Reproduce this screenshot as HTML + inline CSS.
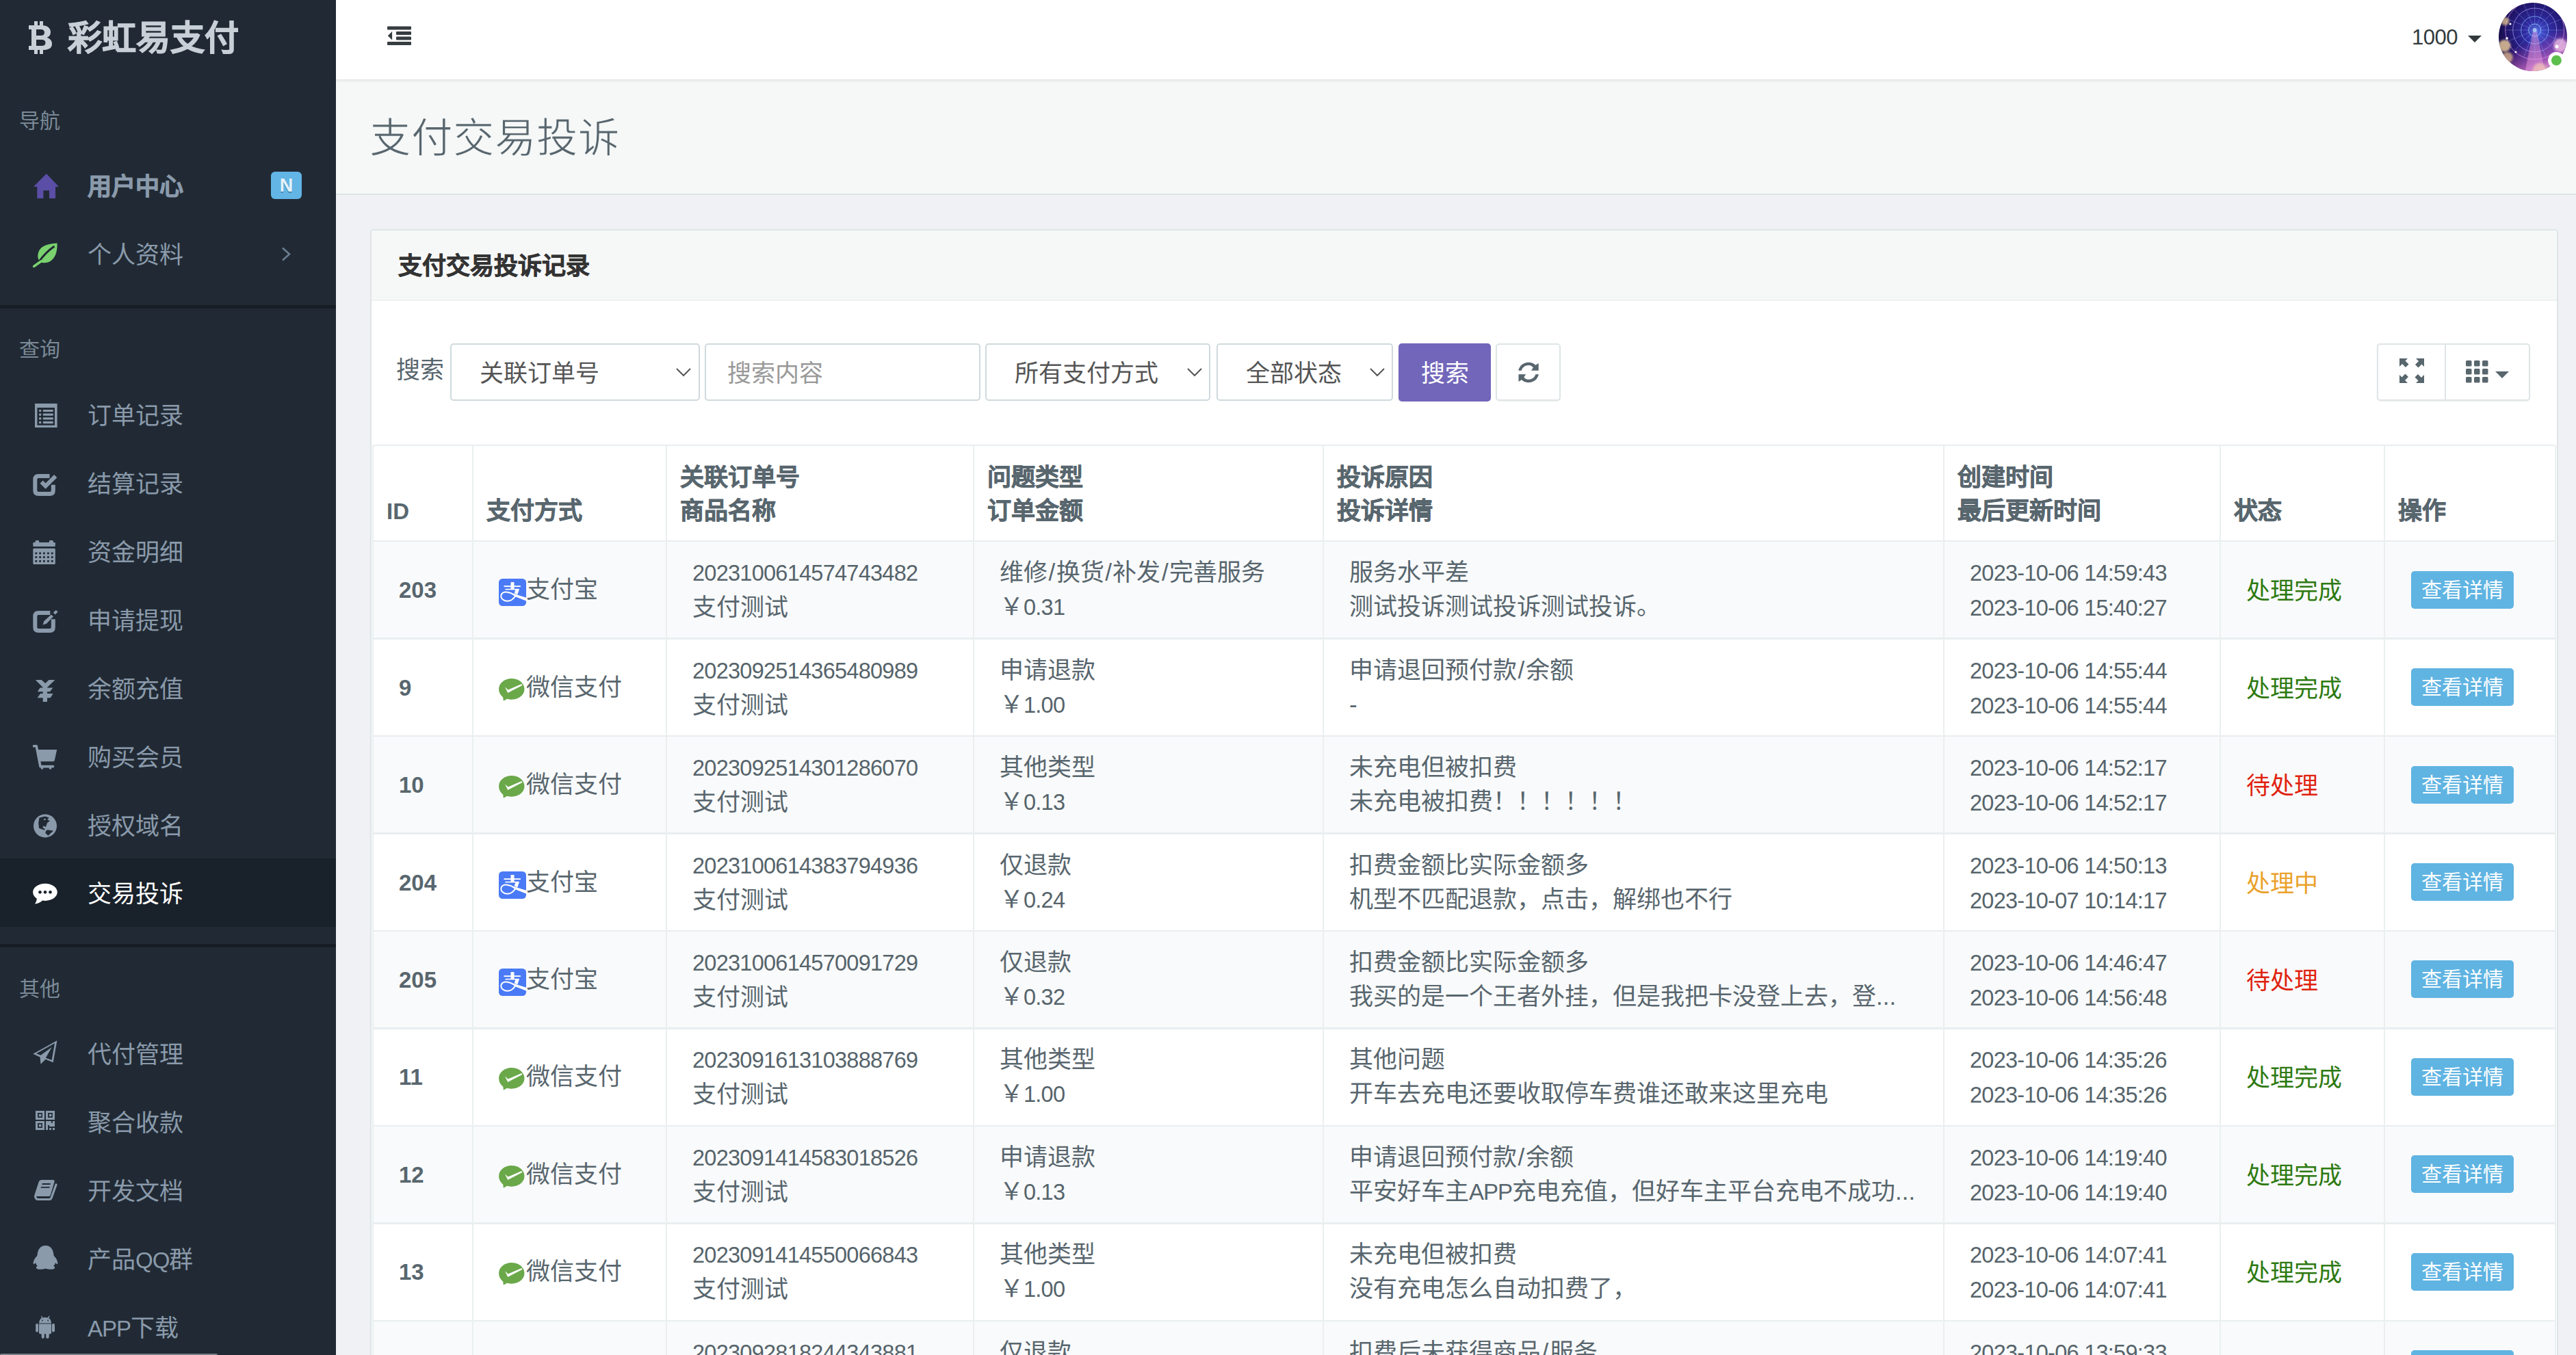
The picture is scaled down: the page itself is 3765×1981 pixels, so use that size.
<!DOCTYPE html>
<html lang="zh-CN"><head><meta charset="utf-8"><title>支付交易投诉</title>
<style>
*{margin:0;padding:0;box-sizing:border-box}
html,body{width:3765px;height:1981px;overflow:hidden;background:#f0f1f4;font-family:"Liberation Sans",sans-serif;color:#58666e}
.abs{position:absolute}
#aside{position:absolute;left:0;top:0;width:491px;height:1981px;background:#212a34;overflow:hidden}
.logo{position:absolute;left:99px;top:16px;-webkit-text-stroke:1px #c8cfd7;font-size:50px;line-height:80px;font-weight:bold;color:#c8cfd7;white-space:nowrap}
.nhd{position:absolute;left:28px;width:200px;font-size:30px;line-height:50px;color:#7b8a98}
.ni{position:absolute;left:0;width:491px;height:100px;line-height:100px;font-size:35px;color:#8a9aab;white-space:nowrap}
.ni .t{position:absolute;left:128px;top:1.5px}
.ni svg{position:absolute}
.ni.act{background:#19212a;color:#fff}
.sep{position:absolute;left:0;width:491px;height:5px;background:#161d25}
#hdr{position:absolute;left:491px;top:0;width:3274px;height:116px;background:#fff;box-shadow:0 2px 4px rgba(0,0,0,.09);z-index:2}
#title{position:absolute;left:491px;top:116px;width:3274px;height:169px;background:#f6f8f8;border-bottom:2px solid #dee5e7}
#title h1{position:absolute;left:48.5px;top:46px;font-size:60.6px;line-height:80px;font-weight:300;color:#58666e;white-space:nowrap;-webkit-text-stroke:1.2px #f6f8f8}
#card{position:absolute;left:541px;top:335px;width:3198px;height:1700px;background:#fff;border:2px solid #dee5e7;border-radius:5px}
#card .ph{position:absolute;left:0;top:0;width:100%;height:103px;background:#f6f8f8;border-bottom:2px solid #edf1f2;border-radius:4px 4px 0 0}
#card .ph span{position:absolute;left:39px;top:27px;font-size:35px;line-height:50px;font-weight:bold;color:#333;-webkit-text-stroke:0.7px #333}
.ctl{position:absolute;top:502px;height:84px;border:2px solid #cfdadd;border-radius:5px;background:#fff;font-size:35px;line-height:80px;color:#555;white-space:nowrap}
.ctl span{position:absolute;top:2px}
.chev{position:absolute;top:34px;width:22px;height:13px}
.btnp{position:absolute;left:2044px;top:502px;width:135px;height:85px;background:#7266ba;border-radius:5px;color:#fff;font-size:35px;line-height:88px;text-align:center}
.btnd{position:absolute;top:502px;height:84px;border:2px solid #dee5e7;border-radius:5px;background:#fff;box-shadow:0 1px 2px rgba(0,0,0,.06)}
.stripe{position:absolute;left:545px;width:3190px;background:#f9fafb}
.hl{position:absolute;left:545px;width:3190px;height:2.5px;background:#e9eef0}
.vl{position:absolute;top:651px;width:2px;height:1400px;background:#eaeff0}
.cell{position:absolute;font-size:35px;line-height:50px;white-space:nowrap;color:#58666e}
.n{font-size:32.5px;letter-spacing:-0.74px;color:#56646b}
.sl{margin:0 1.5px}
.ap{font-size:33px;letter-spacing:-1px}
.nb{font-size:33px;font-weight:bold;color:#58666e}
.nh{font-size:33px}
.th{position:absolute;font-size:35px;line-height:50px;font-weight:bold;color:#58666e;white-space:nowrap;-webkit-text-stroke:0.7px #58666e}
.th .nh{-webkit-text-stroke:0}
.pi{width:40px;height:40px;vertical-align:-12px}
.btn-i{position:absolute;width:150px;height:55px;background:#60b4e2;border-radius:5px;color:#fff;font-size:30px;line-height:55px;text-align:center;white-space:nowrap}
</style></head><body>

<div id="aside">
  <svg class="abs" style="left:42px;top:31px" width="35" height="48" viewBox="0 0 35 48">
    <rect x="8" y="0" width="5" height="8" fill="#c8cfd7"/><rect x="16" y="0" width="5" height="8" fill="#c8cfd7"/>
    <rect x="8" y="40" width="5" height="8" fill="#c8cfd7"/><rect x="16" y="40" width="5" height="8" fill="#c8cfd7"/>
    <path d="M0 6h19c8 0 13 4 13 10 0 4-2 6.5-5.5 8 4.5 1.2 7.5 4.5 7.5 9 0 6.5-5 9-13 9H0v-6h4V12H0zM11 12v9h7c3 0 5-1.5 5-4.5S21 12 18 12zM11 27v9h8c3.5 0 5.5-1.5 5.5-4.5S22.5 27 19 27z" fill="#c8cfd7" fill-rule="evenodd"/>
  </svg>
  <div class="logo">彩虹易支付</div>

  <div class="nhd" style="top:151.5px">导航</div>
  <div class="ni" style="top:221px;color:#8a9aab;font-weight:bold">
    <svg style="left:49px;top:33px" width="37" height="36" viewBox="0 0 37 36"><path d="M0 19L18.8 0 37 19h-5v17h-9V24.5h-8.6V36H5.3V19z" fill="#5b4ea6"/></svg>
    <span class="t" style="-webkit-text-stroke:0.9px #8a9aab">用户中心</span>
    <div class="abs" style="left:396px;top:30px;width:45px;height:40px;background:#62b5e5;border-radius:6px;color:#e4f2fa;font-size:27px;line-height:40px;text-align:center;font-weight:bold;text-shadow:0 2px 0 rgba(0,0,0,.25)">N</div>
  </div>
  <div class="ni" style="top:321px">
    <svg style="left:48px;top:34px" width="36" height="36" viewBox="0 0 36 36"><path d="M35.5 0.5C22 1.5 9.5 4 7.5 17c-.8 5.5 1.5 11 6.5 12 13 2 22.5-9 21.5-28.5z" fill="#7ad26f"/><path d="M9 27.5C15 19 22 11.5 31.5 5" stroke="#212a34" stroke-width="3" fill="none"/><path d="M12 27L1.5 34.5" stroke="#7ad26f" stroke-width="3.5" stroke-linecap="round"/></svg>
    <span class="t">个人资料</span>
    <svg style="left:411px;top:40px" width="15" height="21" viewBox="0 0 15 21"><path d="M2 1.5l10 9-10 9" stroke="#6b7d90" stroke-width="2.6" fill="none"/></svg>
  </div>
  <div class="sep" style="top:446px"></div>

  <div class="nhd" style="top:485.5px">查询</div>
  <div class="ni" style="top:556px">
    <svg style="left:51px;top:34px" width="33" height="35" viewBox="0 0 33 35"><path d="M0 0h32.6v35H0zM3.4 6v25.8H29V6z" fill="#8a9aab" fill-rule="evenodd"/><g fill="#8a9aab"><rect x="6" y="8.9" width="3.3" height="3" rx="1"/><rect x="6" y="14.6" width="3.3" height="3.2" rx="1"/><rect x="6" y="20.2" width="3.3" height="3.3" rx="1"/><rect x="6" y="25.9" width="3.3" height="3.3" rx="1"/><rect x="11.7" y="8.9" width="15.2" height="3" rx="1.2"/><rect x="11.7" y="14.6" width="15.2" height="3.2" rx="1.2"/><rect x="11.7" y="20.2" width="15.2" height="3.3" rx="1.2"/><rect x="11.7" y="25.9" width="15.2" height="3.3" rx="1.2"/></g></svg>
    <span class="t">订单记录</span>
  </div>
  <div class="ni" style="top:656px">
    <svg style="left:48px;top:36px" width="37" height="35" viewBox="0 0 37 35"><path d="M24.5 4H8.3Q3.3 4 3.3 9v16q0 5 5 5h16.5q5 0 5-5v-8.2" stroke="#8a9aab" stroke-width="6" fill="none"/><path d="M12.6 12.6l6 6L33.25 4.1" stroke="#8a9aab" stroke-width="6" fill="none"/></svg>
    <span class="t">结算记录</span>
  </div>
  <div class="ni" style="top:756px">
    <svg style="left:48px;top:33px" width="33" height="37" viewBox="0 0 33 37"><rect x="3.6" y="0.9" width="5.6" height="5" rx="1.5" fill="#8a9aab"/><rect x="23.9" y="0.9" width="6" height="5" rx="1.5" fill="#8a9aab"/><rect x="0.3" y="4" width="32.5" height="5.9" rx="1.2" fill="#8a9aab"/><rect x="0.3" y="12.7" width="32.5" height="23.3" rx="1.5" fill="#8a9aab"/><g fill="#212a34"><rect x="3.4" y="18.5" width="2.8" height="2.8"/><rect x="9.2" y="18.5" width="2.8" height="2.8"/><rect x="15" y="18.5" width="2.8" height="2.8"/><rect x="21" y="18.5" width="2.8" height="2.8"/><rect x="26.8" y="18.5" width="2.8" height="2.8"/><rect x="3.4" y="24.2" width="2.8" height="2.8"/><rect x="9.2" y="24.2" width="2.8" height="2.8"/><rect x="15" y="24.2" width="2.8" height="2.8"/><rect x="21" y="24.2" width="2.8" height="2.8"/><rect x="26.8" y="24.2" width="2.8" height="2.8"/><rect x="3.4" y="30" width="2.8" height="2.8"/><rect x="9.2" y="30" width="2.8" height="2.8"/><rect x="15" y="30" width="2.8" height="2.8"/><rect x="21" y="30" width="2.8" height="2.8"/><rect x="26.8" y="30" width="2.8" height="2.8"/></g></svg>
    <span class="t">资金明细</span>
  </div>
  <div class="ni" style="top:856px">
    <svg style="left:48px;top:35px" width="37" height="35" viewBox="0 0 37 35"><path d="M25.3 5H8.3Q3.3 5 3.3 10v16q0 5 5 5h16.5q5 0 5-5V14.2" stroke="#8a9aab" stroke-width="6" fill="none"/><path d="M14.5 22.5L16.4 17 26.9 7.5 29.9 10.5 20 20.7z" fill="#8a9aab"/><path d="M29.7 4.4L33.8 1 36.6 3.4 32.8 7.5z" fill="#8a9aab"/></svg>
    <span class="t">申请提现</span>
  </div>
  <div class="ni" style="top:956px">
    <svg style="left:48px;top:35px" width="35" height="37" viewBox="0 0 35 37"><path d="M3.8 3H12.7L18.2 7.9 23.5 3H32.4L21 14V35H14.7V14z" fill="#8a9aab"/><path d="M6.8 20.2L10.5 14.4H29.3L24.9 20.2zM6.6 29.2L11.1 23.1H29.5L25.7 29.2z" fill="#8a9aab"/></svg>
    <span class="t">余额充值</span>
  </div>
  <div class="ni" style="top:1056px">
    <svg style="left:48px;top:33px" width="37" height="37" viewBox="0 0 37 37"><path d="M1.2 1.75H5.2L11 31.6H29.5" stroke="#8a9aab" stroke-width="3.6" fill="none" stroke-linecap="round" stroke-linejoin="round"/><path d="M6.6 7H35.2L31.8 22.5Q31.5 24.3 29.5 24.3H10.8z" fill="#8a9aab"/><rect x="11.9" y="31" width="3.2" height="4.8" rx="1.5" fill="#8a9aab"/><rect x="23.9" y="31" width="3.2" height="4.8" rx="1.5" fill="#8a9aab"/></svg>
    <span class="t">购买会员</span>
  </div>
  <div class="ni" style="top:1156px">
    <svg style="left:48px;top:33px" width="37" height="37" viewBox="0 0 37 37"><circle cx="18" cy="18.4" r="17" fill="#8a9aab"/><path d="M9.5 6.4L18 4.4 23.7 6.4 21.2 8.9 24.9 11.3 21.2 13.7 18.8 20.2 16.4 18.4 13.9 20.2 18 23.5 16.5 24.5 9 21.8 8.2 13.7z" fill="#212a34"/><path d="M16 8h2.8v1.7H16z" fill="#8a9aab"/><path d="M18.8 25.9L21.2 24.3 30 25.5 22.4 32.8 18.4 29.1z" fill="#212a34"/></svg>
    <span class="t">授权域名</span>
  </div>
  <div class="ni act" style="top:1255px;height:100px">
    <svg style="left:47px;top:35px" width="38" height="33" viewBox="0 0 38 33"><path d="M6.8 23.7C3.2 21.4 1.1 18 1.1 14.35 1.1 7.4 9.1 1.8 19 1.8S36.8 7.4 36.8 14.35 28.8 26.9 19 26.9c-1.3 0-2.6-.1-3.9-.3C12 29.5 8 31.4 3.75 31.6 5.6 29.4 6.6 26.5 6.8 23.7z" fill="#fff"/><circle cx="11.5" cy="14.35" r="2.3" fill="#19212a"/><circle cx="19" cy="14.35" r="2.3" fill="#19212a"/><circle cx="26.5" cy="14.35" r="2.3" fill="#19212a"/></svg>
    <span class="t">交易投诉</span>
  </div>
  <div class="sep" style="top:1380px"></div>

  <div class="nhd" style="top:1421px">其他</div>
  <div class="ni" style="top:1490px">
    <svg style="left:47px;top:30px" width="38" height="38" viewBox="0 0 38 38"><path d="M1.3 20.8L36.4 1.3 30.7 33.2 19.6 28.8 12.5 35.8 11.5 25.5zM6 20.2L12.5 22.7 28.7 10.9 19.8 26.7 28.7 29.8 33 5.2z" fill="#8a9aab" fill-rule="evenodd"/></svg>
    <span class="t">代付管理</span>
  </div>
  <div class="ni" style="top:1590px">
    <svg style="left:52px;top:34px" width="28" height="28" viewBox="0 0 28 28"><path d="M0 0h13v13H0zM3 3v6.9h6.9V3zM15 0h13v13H15zM18 3v6.9h6.9V3zM0 15h13v13H0zM3 18v6.9h6.9V18z" fill="#8a9aab" fill-rule="evenodd"/><path d="M4.8 4.8h3.5v3.5H4.8zM19.8 4.8h3.5v3.5h-3.5zM4.8 19.8h3.5v3.5H4.8z" fill="#8a9aab"/><path d="M15 15h7.9v2.8h2V15H28v8.1H20.1V21H18v7h-3zM20.1 24.9h2.8V28h-2.8zM24.9 24.9H28V28h-3.1z" fill="#8a9aab"/></svg>
    <span class="t">聚合收款</span>
  </div>
  <div class="ni" style="top:1690px">
    <svg style="left:49px;top:33px" width="35" height="33" viewBox="0 0 35 33"><path d="M11.5 2H28.5Q31.3 2 30.5 5L24.7 24.5Q24.1 26.1 22.5 26.1H3.5Q1 26.1 1.6 23.6L7.8 4.5Q8.6 2 11.5 2zM12.9 7.1L12.3 8.9H24.4L24.9 7.1zM11.1 12.1L10.5 13.8H23.4L23.9 12.1z" fill="#8a9aab" fill-rule="evenodd"/><path d="M2.6 25.5Q2.6 30.5 7 30.5H23Q25.3 30.5 26.2 28L33 9" stroke="#8a9aab" stroke-width="3.2" fill="none" stroke-linecap="round"/></svg>
    <span class="t">开发文档</span>
  </div>
  <div class="ni" style="top:1790px">
    <svg style="left:48px;top:30px" width="37" height="37" viewBox="0 0 37 37"><path d="M18.6 0.9C11 0.9 7 7 6.5 15L6 16.5C3 19 .5 23.5.7 27.5 1 29 2.5 28 4 26 4.5 28.5 5.8 30 7 31 5 31.5 4.5 33 5 34 6 36 11 36 15 35.5 17 35.2 18 34.6 18.6 34.4 19.2 34.6 20.2 35.2 22.2 35.5 26 36 31 36 32 34 32.5 33 32 31.5 30 31 31.2 30 32.5 28.5 33 26 34.5 28 36 29 36.3 27.5 36.5 23.5 34 19 31 16.5L30.5 15C30 7 26 .9 18.6.9z" fill="#8a9aab"/></svg>
    <span class="t">产品<span style="font-size:33px;letter-spacing:-1px">QQ</span>群</span>
  </div>
  <div class="ni" style="top:1890px">
    <svg style="left:52px;top:33px" width="29" height="35" viewBox="0 0 29 35"><path d="M8.3 1.4L10.3 4.3M20.1 1.2L18.2 4.3" stroke="#8a9aab" stroke-width="1.4"/><path d="M5 11Q5.3 3.1 14 3.1T23.1 11z" fill="#8a9aab"/><path d="M5 12.9H23.1V25.5Q23.1 27.2 21.4 27.2H19.7V32.1Q19.7 33.9 17.45 33.9T15.2 32.1V27.2H12.8V32.1Q12.8 33.9 10.75 33.9T8.7 32.1V27.2H6.7Q5 27.2 5 25.5z" fill="#8a9aab"/><rect x="0.2" y="12" width="3.8" height="12.6" rx="1.9" fill="#8a9aab"/><rect x="24" y="12" width="4" height="12.6" rx="2" fill="#8a9aab"/><circle cx="9.9" cy="7.5" r="0.9" fill="#212a34"/><circle cx="18.2" cy="7.5" r="0.9" fill="#212a34"/><path d="M5 11.1h18.1v1.8H5z" fill="#5f6f7e"/></svg>
    <span class="t"><span style="font-size:33px;letter-spacing:-1px">APP</span>下载</span>
  </div>
  <div class="abs" style="left:0;top:1979px;width:318px;height:4px;background:#7b8188;border-radius:2px"></div>
</div>

<div id="hdr">
  <svg class="abs" style="left:75px;top:38px" width="36" height="29" viewBox="0 0 36 29">
    <rect x="0" y="0.5" width="35" height="5" rx="1" fill="#363d41"/>
    <rect x="13" y="8" width="22" height="5" rx="1" fill="#363d41"/>
    <rect x="13" y="15.5" width="22" height="5" rx="1" fill="#363d41"/>
    <rect x="0" y="23" width="35" height="5" rx="1" fill="#363d41"/>
    <path d="M0.8 14.3L7.1 8v12.5z" fill="#363d41"/>
  </svg>
  <div class="abs" style="left:3034px;top:30px;font-size:31px;line-height:50px;color:#333a3d;letter-spacing:-0.5px">1000</div>
  <svg class="abs" style="left:3116px;top:52px" width="20" height="10" viewBox="0 0 20 10"><path d="M0 0h20L10 10z" fill="#333a3d"/></svg>
  <svg class="abs" style="left:3161px;top:4px" width="104" height="104" viewBox="0 0 104 104">
    <defs>
      <radialGradient id="av1" cx="0.55" cy="0.42" r="0.62"><stop offset="0" stop-color="#4a60e0"/><stop offset="0.3" stop-color="#2f2aa0"/><stop offset="0.7" stop-color="#1f1468"/><stop offset="1" stop-color="#140c3a"/></radialGradient>
      <linearGradient id="av2" x1="0.3" y1="0.3" x2="0.6" y2="1"><stop offset="0.35" stop-color="#c050d0" stop-opacity="0"/><stop offset="0.8" stop-color="#d070d0" stop-opacity="0.75"/><stop offset="1" stop-color="#f0b0d8" stop-opacity="0.95"/></linearGradient>
      <clipPath id="avc"><circle cx="50" cy="50" r="50"/></clipPath><filter id="blr" x="-50%" y="-50%" width="200%" height="200%"><feGaussianBlur stdDeviation="1.8"/></filter>
    </defs>
    <g clip-path="url(#avc)">
      <rect width="104" height="104" fill="url(#av1)"/>
      <rect width="104" height="104" fill="url(#av2)"/>
      <g fill="none" stroke-width="1">
        <circle cx="52.7" cy="40" r="9" stroke="#9ad0ff" stroke-opacity=".8"/>
        <circle cx="52.7" cy="40" r="20" stroke="#88c0ff" stroke-opacity=".7"/>
        <circle cx="52.7" cy="40" r="32" stroke="#b0a0ff" stroke-opacity=".7"/>
        <circle cx="52.7" cy="40" r="43" stroke="#e090f0" stroke-opacity=".7"/>
        <path d="M52.7-3V83M9.7 40h86M22.3 9.6l60.8 60.8M83.1 9.6L22.3 70.4M36.2 .3l33 79.4M69.2 .3L36.2 79.7M13 23.5l79.4 33M92.4 23.5L13 56.5" stroke="#a8d0ff" stroke-opacity=".4" stroke-width=".7"/>
      </g>
      <path d="M50 42L38 104H68L56 42z" fill="#f0a0e0" fill-opacity=".45"/>
      <circle cx="52.7" cy="40" r="3" fill="#c8e8ff" fill-opacity=".6"/>
      <circle cx="9.5" cy="27" r="6" fill="#e8c890" fill-opacity=".75" filter="url(#blr)"/>
      <circle cx="8.5" cy="63" r="9" fill="#f0d098" fill-opacity=".8" filter="url(#blr)"/>
      <circle cx="12.6" cy="80" r="8" fill="#f0c890" fill-opacity=".7" filter="url(#blr)"/>
      <circle cx="90" cy="62" r="10" fill="#ffd0f0" fill-opacity=".7" filter="url(#blr)"/>
      <circle cx="60" cy="98" r="10" fill="#f8d0b0" fill-opacity=".6" filter="url(#blr)"/>
      <circle cx="17" cy="31" r="1.5" fill="#fff"/><circle cx="12" cy="52" r="1.8" fill="#fff"/><circle cx="25" cy="72" r="1.5" fill="#fff"/><circle cx="85" cy="64" r="2.5" fill="#fff"/>
    </g>
    <circle cx="84.4" cy="84.3" r="12.3" fill="#fff"/>
    <circle cx="84.4" cy="84.3" r="7.5" fill="#5cbf4d"/>
  </svg>
</div>

<div id="title"><h1>支付交易投诉</h1></div>

<div id="card">
  <div class="ph"><span>支付交易投诉记录</span></div>
</div>

<div class="abs" style="left:579px;top:516px;font-size:35px;line-height:50px;color:#58666e">搜索</div>
<div class="ctl" style="left:658px;width:365px"><span style="left:41px">关联订单号</span><svg class="chev" style="left:327.5px" viewBox="0 0 22 13"><path d="M1 1l10 10L21 1" stroke="#555" stroke-width="2" fill="none"/></svg></div>
<div class="ctl" style="left:1030px;width:403px;color:#999"><span style="left:31px">搜索内容</span></div>
<div class="ctl" style="left:1440px;width:329px"><span style="left:41px">所有支付方式</span><svg class="chev" style="left:292.5px" viewBox="0 0 22 13"><path d="M1 1l10 10L21 1" stroke="#555" stroke-width="2" fill="none"/></svg></div>
<div class="ctl" style="left:1778px;width:258px"><span style="left:41px">全部状态</span><svg class="chev" style="left:222px" viewBox="0 0 22 13"><path d="M1 1l10 10L21 1" stroke="#555" stroke-width="2" fill="none"/></svg></div>
<div class="btnp">搜索</div>
<div class="btnd" style="left:2186px;width:95px">
  <svg class="abs" style="left:31px;top:25px" width="31" height="31" viewBox="0 0 31 31"><path id="rfa" d="M0.3 12.7C1.6 5.6 7.8 0.7 15.1 0.7 19 0.7 22.6 2.2 25.3 4.7L29.7 2V12.7H19L21.9 8.5C20.2 6.2 17.8 5.1 15.1 5.1 10.1 5.1 5.9 8.3 4.9 12.7Z" fill="#58666e"/><path d="M0.3 12.7C1.6 5.6 7.8 0.7 15.1 0.7 19 0.7 22.6 2.2 25.3 4.7L29.7 2V12.7H19L21.9 8.5C20.2 6.2 17.8 5.1 15.1 5.1 10.1 5.1 5.9 8.3 4.9 12.7Z" fill="#58666e" transform="rotate(180 15.1 15.45)"/></svg>
</div>
<div class="btnd" style="left:3474px;width:224px">
  <div class="abs" style="left:97px;top:0;width:2px;height:80px;background:#dee5e7"></div>
  <svg class="abs" style="left:31px;top:20px" width="36" height="36" viewBox="0 0 36 36"><path d="M0 0h12l-3.5 3.5 5 5-4.5 4.5-5-5L0 12zM36 0v12l-3.5-3.5-5 5-4.5-4.5 5-5L24 0zM0 36V24l3.5 3.5 5-5 4.5 4.5-5 5L12 36zM36 36H24l3.5-3.5-5-5 4.5-4.5 5 5L36 24z" fill="#58666e"/></svg>
  <svg class="abs" style="left:128px;top:23px" width="66" height="33" viewBox="0 0 66 33"><g fill="#58666e"><rect x="0" y="0" width="8.5" height="8.5" rx="1.5"/><rect x="12" y="0" width="8.5" height="8.5" rx="1.5"/><rect x="24" y="0" width="8.5" height="8.5" rx="1.5"/><rect x="0" y="12" width="8.5" height="8.5" rx="1.5"/><rect x="12" y="12" width="8.5" height="8.5" rx="1.5"/><rect x="24" y="12" width="8.5" height="8.5" rx="1.5"/><rect x="0" y="24" width="8.5" height="8.5" rx="1.5"/><rect x="12" y="24" width="8.5" height="8.5" rx="1.5"/><rect x="24" y="24" width="8.5" height="8.5" rx="1.5"/><path d="M43 16h20l-10 10z"/></g></svg>
</div>

<div class="stripe" style="top:791.00px;height:142.44px"></div>
<div class="hl" style="top:790.00px;height:2px"></div>
<div class="hl" style="top:932.44px"></div>
<div class="stripe" style="top:1075.88px;height:142.44px"></div>
<div class="hl" style="top:1074.88px"></div>
<div class="hl" style="top:1217.32px"></div>
<div class="stripe" style="top:1360.76px;height:142.44px"></div>
<div class="hl" style="top:1359.76px"></div>
<div class="hl" style="top:1502.20px"></div>
<div class="stripe" style="top:1645.64px;height:142.44px"></div>
<div class="hl" style="top:1644.64px"></div>
<div class="hl" style="top:1787.08px"></div>
<div class="stripe" style="top:1930.52px;height:142.44px"></div>
<div class="hl" style="top:1929.52px"></div>
<div class="hl" style="top:650px;height:2px"></div>
<div class="vl" style="left:544px"></div>
<div class="vl" style="left:690px"></div>
<div class="vl" style="left:973px"></div>
<div class="vl" style="left:1422px"></div>
<div class="vl" style="left:1933px"></div>
<div class="vl" style="left:2840px"></div>
<div class="vl" style="left:3244px"></div>
<div class="vl" style="left:3483.5px"></div>
<div class="vl" style="left:3734px"></div>
<div class="cell" style="left:583px;top:837.22px"><b class="nb">203</b></div>
<div class="cell" style="left:729px;top:837.22px"><svg class="pi" viewBox="0 0 40 40"><rect x="0" y="0" width="40" height="40" rx="5.5" fill="#4a7af5"/><g fill="#fff"><rect x="7.5" y="10.2" width="24.4" height="1.9"/><rect x="17.5" y="5.1" width="5" height="10.5"/><rect x="9.4" y="14.8" width="20.3" height="1.6"/><path d="M24.6 16h5.2l-2.6 7.6-4.6-2.4z"/><path d="M20.5 21.5L40 27.8V32.6L22.8 25.8z"/></g><path d="M23 24.2C17 19.5 6.5 17 3.6 23.6 1.8 28.8 8 33.6 14.5 32.6 18.5 32 21.5 29.5 24.2 25.3" fill="none" stroke="#fff" stroke-width="2"/></svg>支付宝</div>
<div class="cell" style="left:1012px;top:812.22px"><span class="n">2023100614574743482</span><br>支付测试</div>
<div class="cell" style="left:1461px;top:812.22px">维修<span class="sl">/</span>换货<span class="sl">/</span>补发<span class="sl">/</span>完善服务<br>￥<span class="n">0.31</span></div>
<div class="cell" style="left:1972px;top:812.22px">服务水平差<br>测试投诉测试投诉测试投诉。</div>
<div class="cell" style="left:2879px;top:812.22px"><span class="n">2023-10-06 14:59:43</span><br><span class="n">2023-10-06 15:40:27</span></div>
<div class="cell" style="left:3283px;top:839.22px"><span style="color:#2e7a12">处理完成</span></div>
<div class="btn-i" style="left:3524px;top:834.72px">查看详情</div>
<div class="cell" style="left:583px;top:979.66px"><b class="nb">9</b></div>
<div class="cell" style="left:729px;top:979.66px"><svg class="pi" viewBox="0 0 40 40"><path d="M18.8 3.1C29.1 3.1 37.5 9.9 37.5 18.4S29.1 33.7 18.8 33.7c-2.3 0-4.5-.3-6.6-1L6.9 35.7 6.2 30.4C2.5 27.6.1 23.2.1 18.4.1 9.9 8.5 3.1 18.8 3.1z" fill="#6aa84a"/><path d="M9.1 15.6L13.2 24.1 34.3 12.9 33.3 11.1 13.6 19.6z" fill="#fff"/></svg>微信支付</div>
<div class="cell" style="left:1012px;top:954.66px"><span class="n">2023092514365480989</span><br>支付测试</div>
<div class="cell" style="left:1461px;top:954.66px">申请退款<br>￥<span class="n">1.00</span></div>
<div class="cell" style="left:1972px;top:954.66px">申请退回预付款<span class="sl">/</span>余额<br>-</div>
<div class="cell" style="left:2879px;top:954.66px"><span class="n">2023-10-06 14:55:44</span><br><span class="n">2023-10-06 14:55:44</span></div>
<div class="cell" style="left:3283px;top:981.66px"><span style="color:#2e7a12">处理完成</span></div>
<div class="btn-i" style="left:3524px;top:977.16px">查看详情</div>
<div class="cell" style="left:583px;top:1122.10px"><b class="nb">10</b></div>
<div class="cell" style="left:729px;top:1122.10px"><svg class="pi" viewBox="0 0 40 40"><path d="M18.8 3.1C29.1 3.1 37.5 9.9 37.5 18.4S29.1 33.7 18.8 33.7c-2.3 0-4.5-.3-6.6-1L6.9 35.7 6.2 30.4C2.5 27.6.1 23.2.1 18.4.1 9.9 8.5 3.1 18.8 3.1z" fill="#6aa84a"/><path d="M9.1 15.6L13.2 24.1 34.3 12.9 33.3 11.1 13.6 19.6z" fill="#fff"/></svg>微信支付</div>
<div class="cell" style="left:1012px;top:1097.10px"><span class="n">2023092514301286070</span><br>支付测试</div>
<div class="cell" style="left:1461px;top:1097.10px">其他类型<br>￥<span class="n">0.13</span></div>
<div class="cell" style="left:1972px;top:1097.10px">未充电但被扣费<br>未充电被扣费！！！！！！</div>
<div class="cell" style="left:2879px;top:1097.10px"><span class="n">2023-10-06 14:52:17</span><br><span class="n">2023-10-06 14:52:17</span></div>
<div class="cell" style="left:3283px;top:1124.10px"><span style="color:#e0220f">待处理</span></div>
<div class="btn-i" style="left:3524px;top:1119.60px">查看详情</div>
<div class="cell" style="left:583px;top:1264.54px"><b class="nb">204</b></div>
<div class="cell" style="left:729px;top:1264.54px"><svg class="pi" viewBox="0 0 40 40"><rect x="0" y="0" width="40" height="40" rx="5.5" fill="#4a7af5"/><g fill="#fff"><rect x="7.5" y="10.2" width="24.4" height="1.9"/><rect x="17.5" y="5.1" width="5" height="10.5"/><rect x="9.4" y="14.8" width="20.3" height="1.6"/><path d="M24.6 16h5.2l-2.6 7.6-4.6-2.4z"/><path d="M20.5 21.5L40 27.8V32.6L22.8 25.8z"/></g><path d="M23 24.2C17 19.5 6.5 17 3.6 23.6 1.8 28.8 8 33.6 14.5 32.6 18.5 32 21.5 29.5 24.2 25.3" fill="none" stroke="#fff" stroke-width="2"/></svg>支付宝</div>
<div class="cell" style="left:1012px;top:1239.54px"><span class="n">2023100614383794936</span><br>支付测试</div>
<div class="cell" style="left:1461px;top:1239.54px">仅退款<br>￥<span class="n">0.24</span></div>
<div class="cell" style="left:1972px;top:1239.54px">扣费金额比实际金额多<br>机型不匹配退款，点击，解绑也不行</div>
<div class="cell" style="left:2879px;top:1239.54px"><span class="n">2023-10-06 14:50:13</span><br><span class="n">2023-10-07 10:14:17</span></div>
<div class="cell" style="left:3283px;top:1266.54px"><span style="color:#eaa22c">处理中</span></div>
<div class="btn-i" style="left:3524px;top:1262.04px">查看详情</div>
<div class="cell" style="left:583px;top:1406.98px"><b class="nb">205</b></div>
<div class="cell" style="left:729px;top:1406.98px"><svg class="pi" viewBox="0 0 40 40"><rect x="0" y="0" width="40" height="40" rx="5.5" fill="#4a7af5"/><g fill="#fff"><rect x="7.5" y="10.2" width="24.4" height="1.9"/><rect x="17.5" y="5.1" width="5" height="10.5"/><rect x="9.4" y="14.8" width="20.3" height="1.6"/><path d="M24.6 16h5.2l-2.6 7.6-4.6-2.4z"/><path d="M20.5 21.5L40 27.8V32.6L22.8 25.8z"/></g><path d="M23 24.2C17 19.5 6.5 17 3.6 23.6 1.8 28.8 8 33.6 14.5 32.6 18.5 32 21.5 29.5 24.2 25.3" fill="none" stroke="#fff" stroke-width="2"/></svg>支付宝</div>
<div class="cell" style="left:1012px;top:1381.98px"><span class="n">2023100614570091729</span><br>支付测试</div>
<div class="cell" style="left:1461px;top:1381.98px">仅退款<br>￥<span class="n">0.32</span></div>
<div class="cell" style="left:1972px;top:1381.98px">扣费金额比实际金额多<br>我买的是一个王者外挂，但是我把卡没登上去，登...</div>
<div class="cell" style="left:2879px;top:1381.98px"><span class="n">2023-10-06 14:46:47</span><br><span class="n">2023-10-06 14:56:48</span></div>
<div class="cell" style="left:3283px;top:1408.98px"><span style="color:#e0220f">待处理</span></div>
<div class="btn-i" style="left:3524px;top:1404.48px">查看详情</div>
<div class="cell" style="left:583px;top:1549.42px"><b class="nb">11</b></div>
<div class="cell" style="left:729px;top:1549.42px"><svg class="pi" viewBox="0 0 40 40"><path d="M18.8 3.1C29.1 3.1 37.5 9.9 37.5 18.4S29.1 33.7 18.8 33.7c-2.3 0-4.5-.3-6.6-1L6.9 35.7 6.2 30.4C2.5 27.6.1 23.2.1 18.4.1 9.9 8.5 3.1 18.8 3.1z" fill="#6aa84a"/><path d="M9.1 15.6L13.2 24.1 34.3 12.9 33.3 11.1 13.6 19.6z" fill="#fff"/></svg>微信支付</div>
<div class="cell" style="left:1012px;top:1524.42px"><span class="n">2023091613103888769</span><br>支付测试</div>
<div class="cell" style="left:1461px;top:1524.42px">其他类型<br>￥<span class="n">1.00</span></div>
<div class="cell" style="left:1972px;top:1524.42px">其他问题<br>开车去充电还要收取停车费谁还敢来这里充电</div>
<div class="cell" style="left:2879px;top:1524.42px"><span class="n">2023-10-06 14:35:26</span><br><span class="n">2023-10-06 14:35:26</span></div>
<div class="cell" style="left:3283px;top:1551.42px"><span style="color:#2e7a12">处理完成</span></div>
<div class="btn-i" style="left:3524px;top:1546.92px">查看详情</div>
<div class="cell" style="left:583px;top:1691.86px"><b class="nb">12</b></div>
<div class="cell" style="left:729px;top:1691.86px"><svg class="pi" viewBox="0 0 40 40"><path d="M18.8 3.1C29.1 3.1 37.5 9.9 37.5 18.4S29.1 33.7 18.8 33.7c-2.3 0-4.5-.3-6.6-1L6.9 35.7 6.2 30.4C2.5 27.6.1 23.2.1 18.4.1 9.9 8.5 3.1 18.8 3.1z" fill="#6aa84a"/><path d="M9.1 15.6L13.2 24.1 34.3 12.9 33.3 11.1 13.6 19.6z" fill="#fff"/></svg>微信支付</div>
<div class="cell" style="left:1012px;top:1666.86px"><span class="n">2023091414583018526</span><br>支付测试</div>
<div class="cell" style="left:1461px;top:1666.86px">申请退款<br>￥<span class="n">0.13</span></div>
<div class="cell" style="left:1972px;top:1666.86px">申请退回预付款<span class="sl">/</span>余额<br>平安好车主<span class="ap">APP</span>充电充值，但好车主平台充电不成功...</div>
<div class="cell" style="left:2879px;top:1666.86px"><span class="n">2023-10-06 14:19:40</span><br><span class="n">2023-10-06 14:19:40</span></div>
<div class="cell" style="left:3283px;top:1693.86px"><span style="color:#2e7a12">处理完成</span></div>
<div class="btn-i" style="left:3524px;top:1689.36px">查看详情</div>
<div class="cell" style="left:583px;top:1834.30px"><b class="nb">13</b></div>
<div class="cell" style="left:729px;top:1834.30px"><svg class="pi" viewBox="0 0 40 40"><path d="M18.8 3.1C29.1 3.1 37.5 9.9 37.5 18.4S29.1 33.7 18.8 33.7c-2.3 0-4.5-.3-6.6-1L6.9 35.7 6.2 30.4C2.5 27.6.1 23.2.1 18.4.1 9.9 8.5 3.1 18.8 3.1z" fill="#6aa84a"/><path d="M9.1 15.6L13.2 24.1 34.3 12.9 33.3 11.1 13.6 19.6z" fill="#fff"/></svg>微信支付</div>
<div class="cell" style="left:1012px;top:1809.30px"><span class="n">2023091414550066843</span><br>支付测试</div>
<div class="cell" style="left:1461px;top:1809.30px">其他类型<br>￥<span class="n">1.00</span></div>
<div class="cell" style="left:1972px;top:1809.30px">未充电但被扣费<br>没有充电怎么自动扣费了，</div>
<div class="cell" style="left:2879px;top:1809.30px"><span class="n">2023-10-06 14:07:41</span><br><span class="n">2023-10-06 14:07:41</span></div>
<div class="cell" style="left:3283px;top:1836.30px"><span style="color:#2e7a12">处理完成</span></div>
<div class="btn-i" style="left:3524px;top:1831.80px">查看详情</div>
<div class="cell" style="left:583px;top:1976.74px"><b class="nb">6</b></div>
<div class="cell" style="left:729px;top:1976.74px"><svg class="pi" viewBox="0 0 40 40"><path d="M18.8 3.1C29.1 3.1 37.5 9.9 37.5 18.4S29.1 33.7 18.8 33.7c-2.3 0-4.5-.3-6.6-1L6.9 35.7 6.2 30.4C2.5 27.6.1 23.2.1 18.4.1 9.9 8.5 3.1 18.8 3.1z" fill="#6aa84a"/><path d="M9.1 15.6L13.2 24.1 34.3 12.9 33.3 11.1 13.6 19.6z" fill="#fff"/></svg>微信支付</div>
<div class="cell" style="left:1012px;top:1951.74px"><span class="n">2023092818244343881</span><br>支付测试</div>
<div class="cell" style="left:1461px;top:1951.74px">仅退款<br>￥<span class="n">0.10</span></div>
<div class="cell" style="left:1972px;top:1951.74px">扣费后未获得商品<span class="sl">/</span>服务<br>-</div>
<div class="cell" style="left:2879px;top:1951.74px"><span class="n">2023-10-06 13:59:33</span><br><span class="n">2023-10-06 13:59:33</span></div>
<div class="cell" style="left:3283px;top:1978.74px"><span style="color:#2e7a12">处理完成</span></div>
<div class="btn-i" style="left:3524px;top:1974.24px">查看详情</div>
<div class="th" style="left:565px;top:721.75px"><span class="nh">ID</span></div>
<div class="th" style="left:711px;top:721.75px">支付方式</div>
<div class="th" style="left:994px;top:672.5px">关联订单号</div>
<div class="th" style="left:994px;top:721.75px">商品名称</div>
<div class="th" style="left:1443px;top:672.5px">问题类型</div>
<div class="th" style="left:1443px;top:721.75px">订单金额</div>
<div class="th" style="left:1954px;top:672.5px">投诉原因</div>
<div class="th" style="left:1954px;top:721.75px">投诉详情</div>
<div class="th" style="left:2861px;top:672.5px">创建时间</div>
<div class="th" style="left:2861px;top:721.75px">最后更新时间</div>
<div class="th" style="left:3265px;top:721.75px">状态</div>
<div class="th" style="left:3504.5px;top:721.75px">操作</div>

</body></html>
